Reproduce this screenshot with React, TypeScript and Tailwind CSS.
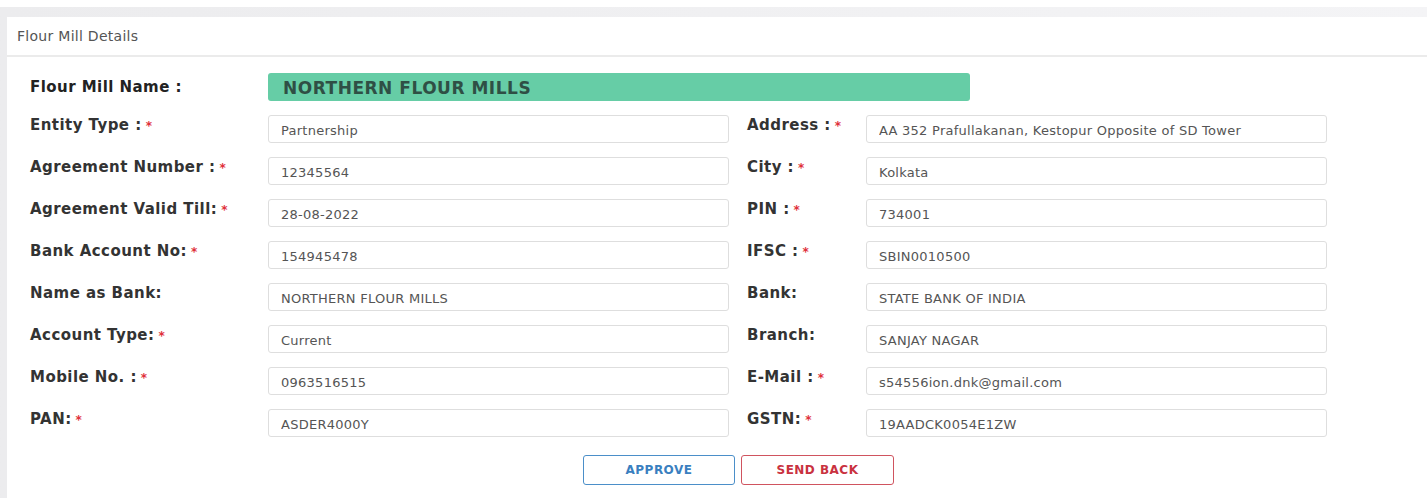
import React from 'react';

type Field = { label: string; value: string; required?: boolean };

const leftFields: Field[] = [
  { label: 'Entity Type :', value: 'Partnership', required: true },
  { label: 'Agreement Number :', value: '12345564', required: true },
  { label: 'Agreement Valid Till:', value: '28-08-2022', required: true },
  { label: 'Bank Account No:', value: '154945478', required: true },
  { label: 'Name as Bank:', value: 'NORTHERN FLOUR MILLS' },
  { label: 'Account Type:', value: 'Current', required: true },
  { label: 'Mobile No. :', value: '0963516515', required: true },
  { label: 'PAN:', value: 'ASDER4000Y', required: true },
];

const rightFields: Field[] = [
  { label: 'Address :', value: 'AA 352 Prafullakanan, Kestopur Opposite of SD Tower', required: true },
  { label: 'City :', value: 'Kolkata', required: true },
  { label: 'PIN :', value: '734001', required: true },
  { label: 'IFSC :', value: 'SBIN0010500', required: true },
  { label: 'Bank:', value: 'STATE BANK OF INDIA' },
  { label: 'Branch:', value: 'SANJAY NAGAR' },
  { label: 'E-Mail :', value: 's54556ion.dnk@gmail.com', required: true },
  { label: 'GSTN:', value: '19AADCK0054E1ZW', required: true },
];

const Label: React.FC<{ field: Field; width: string }> = ({ field, width }) => (
  <div className={`${width} shrink-0 whitespace-nowrap text-[15px] font-bold leading-[20px] tracking-[0.03em] text-[#333]`}>
    {field.label}
    {field.required && <span className="ml-[4px] text-[12px] text-[#e0303a]">*</span>}
  </div>
);

const ReadOnlyInput: React.FC<{ value: string }> = ({ value }) => (
  <input
    readOnly
    value={value}
    className="h-[28px] w-[461px] shrink-0 rounded-[3px] border border-[#dedede] bg-white px-[12px] pt-[2px] text-[13px] tracking-[0.02em] text-[#555] outline-none"
  />
);

export default function App() {
  return (
    <div className="min-h-[498px] bg-white pt-[7px] font-['DejaVu_Sans',_'Liberation_Sans',_sans-serif]">
      <div className="bg-gradient-to-r from-[#ececee] to-[#f4f4f6] pl-[7px] pt-[10px]">
        <div className="min-h-[481px] bg-white">
          <div className="flex h-[40px] items-center border-b-2 border-[#ebebeb] px-[10px] text-[14px] tracking-[0.02em] text-[#555]">
            Flour Mill Details
          </div>

          <div className="flex flex-col gap-[14px] pl-[23px] pt-[16px]">
            <div className="flex items-center">
              <div className="w-[238px] shrink-0 text-[15px] font-bold tracking-[0.03em] text-[#222]">Flour Mill Name :</div>
              <div className="flex h-[28px] w-[702px] items-center rounded-[3px] bg-[#66cda6] px-[15px] pt-[3px] text-[17px] font-bold tracking-[0.03em] text-[#2f4f45]">
                NORTHERN FLOUR MILLS
              </div>
            </div>

            {leftFields.map((left, i) => (
              <div key={left.label} className="flex">
                <Label field={left} width="w-[238px]" />
                <ReadOnlyInput value={left.value} />
                <div className="w-[18px] shrink-0" />
                <Label field={rightFields[i]} width="w-[119px]" />
                <ReadOnlyInput value={rightFields[i].value} />
              </div>
            ))}

            <div className="flex gap-[6px] pl-[553px] pt-[4px]">
              <button className="h-[30px] w-[152px] rounded-[3px] border border-[#4b8fc9] bg-white text-[12px] font-bold tracking-[0.04em] text-[#3a7fc0]">
                APPROVE
              </button>
              <button className="h-[30px] w-[153px] rounded-[3px] border border-[#d0545f] bg-white text-[12px] font-bold tracking-[0.04em] text-[#c9323f]">
                SEND BACK
              </button>
            </div>
          </div>
        </div>
      </div>
    </div>
  );
}
